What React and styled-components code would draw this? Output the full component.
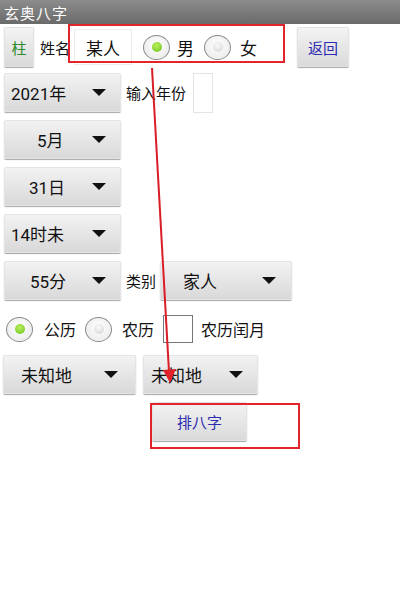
import React from "react";
import styled, { createGlobalStyle } from "styled-components";

const Global = createGlobalStyle`
  html, body {
    margin: 0;
    padding: 0;
    background: #fff;
  }
  body {
    font-family: Roboto, "Noto Sans CJK SC", "Noto Sans", sans-serif;
    color: #111;
  }
`;

const Screen = styled.div`
  position: relative;
  width: 400px;
  height: 600px;
  overflow: hidden;
  background: #fff;
`;

const TitleBar = styled.div`
  height: 24px;
  display: flex;
  align-items: center;
  padding-left: 4px;
  background: linear-gradient(#8c8c8c, #6a6a6a);
  color: #fff;
  font-size: 15px;
  letter-spacing: 1px;
`;

const Form = styled.div`
  display: flex;
  flex-direction: column;
  gap: 8px;
  padding: 3px 0 0 3px;
`;

const Row = styled.div`
  display: flex;
  align-items: center;
  gap: ${(p) => p.gap || 4}px;
  height: ${(p) => p.h || 39}px;
  margin-top: ${(p) => p.mt || 0}px;
`;

const Button = styled.div`
  display: flex;
  align-items: center;
  justify-content: center;
  box-sizing: border-box;
  width: ${(p) => p.w}px;
  height: ${(p) => p.h || 39}px;
  margin-left: ${(p) => p.ml || 0}px;
  border-radius: 2px;
  background: linear-gradient(#f4f4f4, #d9d9d9);
  box-shadow: 0 1px 1px rgba(0, 0, 0, 0.35), inset 0 0 0 1px #e2e2e2;
  color: ${(p) => p.color || "#111"};
  font-size: ${(p) => p.size || 15}px;
`;

const Spinner = styled.div`
  display: flex;
  align-items: center;
  box-sizing: border-box;
  width: ${(p) => p.w}px;
  height: 39px;
  padding-left: ${(p) => p.pad}px;
  margin-left: ${(p) => p.ml || 0}px;
  border-radius: 2px;
  background: linear-gradient(#f3f3f3, #d8d8d8);
  box-shadow: 0 1px 1px rgba(0, 0, 0, 0.35), inset 0 0 0 1px #e4e4e4;
  font-size: 17px;
`;

const SpinText = styled.span`
  white-space: nowrap;
`;

const Caret = styled.span`
  width: 0;
  height: 0;
  margin-left: auto;
  margin-right: ${(p) => p.mr || 15}px;
  border-left: 7px solid transparent;
  border-right: 7px solid transparent;
  border-top: 7px solid #111;
`;

const Label = styled.span`
  font-size: ${(p) => p.size || 15}px;
  margin-left: ${(p) => p.ml || 0}px;
  white-space: nowrap;
`;

const NameInput = styled.div`
  box-sizing: border-box;
  width: 58px;
  height: 36px;
  display: flex;
  align-items: center;
  justify-content: center;
  border: 1px solid #ececec;
  font-size: 17px;
`;

const YearBox = styled.div`
  box-sizing: border-box;
  width: 20px;
  height: 40px;
  margin-left: 3px;
  border: 1px solid #e4e4e4;
  background: #fff;
`;

const Radio = styled.span`
  box-sizing: border-box;
  flex: none;
  width: 27px;
  height: 25px;
  border-radius: 50%;
  border: 1.5px solid #8a8a8a;
  background: radial-gradient(circle at 50% 40%, #fff, #e6e6e6);
  display: flex;
  align-items: center;
  justify-content: center;
  margin-left: ${(p) => p.ml || 0}px;

  &::after {
    content: "";
    width: 10px;
    height: 10px;
    border-radius: 50%;
    background: ${(p) =>
      p.checked
        ? "radial-gradient(circle at 45% 35%, #b8ef5a, #6cc21c)"
        : "radial-gradient(circle at 45% 35%, #fafafa, #d2d2d2)"};
  }
`;

const Check = styled.span`
  box-sizing: border-box;
  width: 30px;
  height: 28px;
  border: 1px solid #777;
  background: #fff;
  margin-left: ${(p) => p.ml || 0}px;
`;

const Mark = styled.div`
  position: absolute;
  left: ${(p) => p.x}px;
  top: ${(p) => p.y}px;
  width: ${(p) => p.w}px;
  height: ${(p) => p.h}px;
  box-sizing: border-box;
  border: 2px solid #e2242c;
  pointer-events: none;
`;

const Arrow = styled.svg`
  position: absolute;
  left: 0;
  top: 0;
  pointer-events: none;
`;

function Select({ w, ml, pad, text, mr }) {
  return (
    <Spinner w={w} ml={ml} pad={pad}>
      <SpinText>{text}</SpinText>
      <Caret mr={mr} />
    </Spinner>
  );
}

export default function App() {
  return (
    <Screen>
      <Global />
      <TitleBar>玄奥八字</TitleBar>
      <Form>
        <Row h={40}>
          <Button w={30} h={40} ml={1} color="#2a8a2a">柱</Button>
          <Label ml={2}>姓名</Label>
          <NameInput>某人</NameInput>
          <Radio checked ml={7} />
          <Label size={17} ml={3}>男</Label>
          <Radio ml={6} />
          <Label size={17} ml={5}>女</Label>
          <Button w={52} h={40} ml={36} color="#2b2bb0">返回</Button>
        </Row>
        <Row mt={-2}>
          <Select w={117} ml={1} pad={7} text="2021年" />
          <Label ml={1}>输入年份</Label>
          <YearBox />
        </Row>
        <Row>
          <Select w={117} ml={1} pad={33} text="5月" />
        </Row>
        <Row>
          <Select w={117} ml={1} pad={25} text="31日" />
        </Row>
        <Row>
          <Select w={117} ml={1} pad={7} text="14时未" />
        </Row>
        <Row>
          <Select w={117} ml={1} pad={26} text="55分" />
          <Label ml={1}>类别</Label>
          <Select w={132} pad={23} text="家人" mr={16} />
        </Row>
        <Row h={30} mt={6} gap={0}>
          <Radio checked ml={3} />
          <Label size={16} ml={7}>公历</Label>
          <Radio ml={5} />
          <Label size={16} ml={6}>农历</Label>
          <Check ml={5} />
          <Label size={16} ml={4}>农历闰月</Label>
        </Row>
        <Row mt={3} gap={7}>
          <Select w={133} pad={18} text="未知地" mr={18} />
          <Select w={115} pad={8} text="未知地" mr={15} />
        </Row>
        <Row>
          <Button w={95} ml={149} color="#2b2bb0" size={15}>排八字</Button>
        </Row>
      </Form>

      <Mark x={68} y={24} w={217} h={39} />
      <Mark x={150} y={403} w={150} h={46} />
      <Arrow width="400" height="600" viewBox="0 0 400 600">
        <line x1="152" y1="68" x2="169" y2="372" stroke="#d81e26" strokeWidth="2" />
        <polygon points="163,370 176,369 170,383" fill="#e0222a" />
      </Arrow>
    </Screen>
  );
}
